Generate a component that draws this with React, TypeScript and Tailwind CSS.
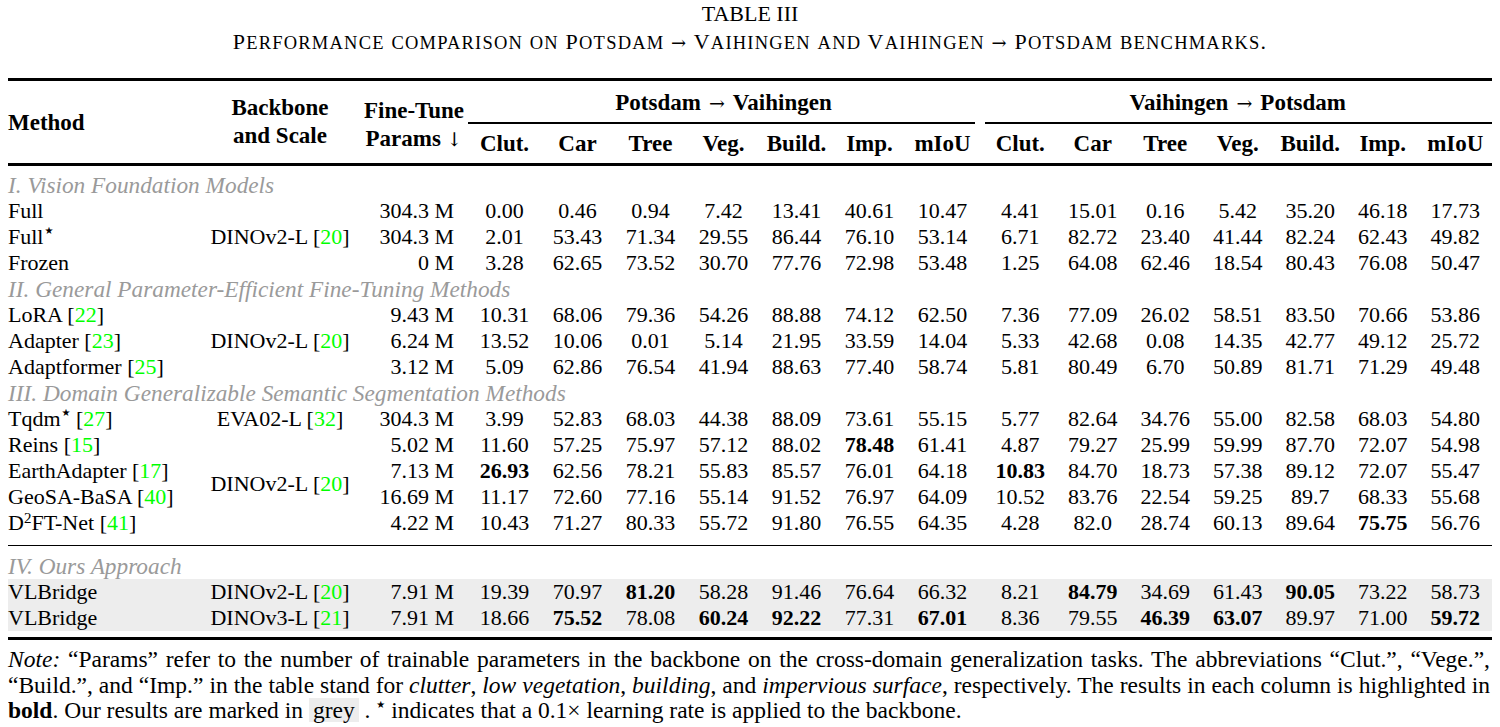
import React from "react";

// values prefixed with "*" are printed bold
interface RowData {
  name: React.ReactNode;
  backbone?: React.ReactNode;
  span?: number;
  params: string;
  a: string[];
  b: string[];
  grey?: boolean;
}

const Cite = ({ n }: { n: number }) => (
  <span>
    [<span className="text-[#00ff00]">{n}</span>]
  </span>
);

const Star = () => (
  <sup className="font-['DejaVu_Sans',sans-serif] text-[10px] -top-[1.05em] ml-[1px]">★</sup>
);

const cols =
  "grid grid-cols-[192px_160px_108px_repeat(7,73px)_5px_repeat(7,72.5px)] auto-rows-[26px]";

const Num = ({ v, grey }: { v: string; grey?: boolean }) => {
  const bold = v.startsWith("*");
  return (
    <div
      className={`flex items-center justify-center ${bold ? "font-bold" : ""} ${
        grey ? "bg-[#ededed]" : ""
      }`}
    >
      {bold ? v.slice(1) : v}
    </div>
  );
};

const Section = ({ label }: { label: string }) => (
  <div className="col-span-full flex items-center italic text-[23.3px] text-[#9a9a9a]">{label}</div>
);

const Row = ({ r }: { r: RowData }) => {
  const bg = r.grey ? "bg-[#ededed]" : "";
  return (
    <>
      <div className={`flex items-center ${bg}`}>{r.name}</div>
      {r.backbone !== undefined && (
        <div
          className={`flex items-center justify-center ${bg}`}
          style={{ gridRow: `span ${r.span ?? 1}` }}
        >
          {r.backbone}
        </div>
      )}
      <div className={`flex items-center justify-end pr-[14px] ${bg}`}>{r.params}</div>
      {r.a.map((v, i) => (
        <Num key={"a" + i} v={v} grey={r.grey} />
      ))}
      <div className={bg} />
      {r.b.map((v, i) => (
        <Num key={"b" + i} v={v} grey={r.grey} />
      ))}
    </>
  );
};

const dino2 = (
  <span>
    DINOv2-L <Cite n={20} />
  </span>
);

const group1: RowData[] = [
  { name: "Full", backbone: dino2, span: 3, params: "304.3 M", a: ["0.00", "0.46", "0.94", "7.42", "13.41", "40.61", "10.47"], b: ["4.41", "15.01", "0.16", "5.42", "35.20", "46.18", "17.73"] },
  { name: <span>Full<Star /></span>, params: "304.3 M", a: ["2.01", "53.43", "71.34", "29.55", "86.44", "76.10", "53.14"], b: ["6.71", "82.72", "23.40", "41.44", "82.24", "62.43", "49.82"] },
  { name: "Frozen", params: "0 M", a: ["3.28", "62.65", "73.52", "30.70", "77.76", "72.98", "53.48"], b: ["1.25", "64.08", "62.46", "18.54", "80.43", "76.08", "50.47"] },
];

const group2: RowData[] = [
  { name: <span>LoRA <Cite n={22} /></span>, backbone: dino2, span: 3, params: "9.43 M", a: ["10.31", "68.06", "79.36", "54.26", "88.88", "74.12", "62.50"], b: ["7.36", "77.09", "26.02", "58.51", "83.50", "70.66", "53.86"] },
  { name: <span>Adapter <Cite n={23} /></span>, params: "6.24 M", a: ["13.52", "10.06", "0.01", "5.14", "21.95", "33.59", "14.04"], b: ["5.33", "42.68", "0.08", "14.35", "42.77", "49.12", "25.72"] },
  { name: <span>Adaptformer <Cite n={25} /></span>, params: "3.12 M", a: ["5.09", "62.86", "76.54", "41.94", "88.63", "77.40", "58.74"], b: ["5.81", "80.49", "6.70", "50.89", "81.71", "71.29", "49.48"] },
];

const group3: RowData[] = [
  { name: <span>Tqdm<Star /> <Cite n={27} /></span>, backbone: <span>EVA02-L <Cite n={32} /></span>, params: "304.3 M", a: ["3.99", "52.83", "68.03", "44.38", "88.09", "73.61", "55.15"], b: ["5.77", "82.64", "34.76", "55.00", "82.58", "68.03", "54.80"] },
  { name: <span>Reins <Cite n={15} /></span>, backbone: dino2, span: 4, params: "5.02 M", a: ["11.60", "57.25", "75.97", "57.12", "88.02", "*78.48", "61.41"], b: ["4.87", "79.27", "25.99", "59.99", "87.70", "72.07", "54.98"] },
  { name: <span>EarthAdapter <Cite n={17} /></span>, params: "7.13 M", a: ["*26.93", "62.56", "78.21", "55.83", "85.57", "76.01", "64.18"], b: ["*10.83", "84.70", "18.73", "57.38", "89.12", "72.07", "55.47"] },
  { name: <span>GeoSA-BaSA <Cite n={40} /></span>, params: "16.69 M", a: ["11.17", "72.60", "77.16", "55.14", "91.52", "76.97", "64.09"], b: ["10.52", "83.76", "22.54", "59.25", "89.7", "68.33", "55.68"] },
  { name: <span>D<sup className="text-[15px]">2</sup>FT-Net <Cite n={41} /></span>, params: "4.22 M", a: ["10.43", "71.27", "80.33", "55.72", "91.80", "76.55", "64.35"], b: ["4.28", "82.0", "28.74", "60.13", "89.64", "*75.75", "56.76"] },
];

const ours: RowData[] = [
  { name: "VLBridge", backbone: dino2, params: "7.91 M", grey: true, a: ["19.39", "70.97", "*81.20", "58.28", "91.46", "76.64", "66.32"], b: ["8.21", "*84.79", "34.69", "61.43", "*90.05", "73.22", "58.73"] },
  { name: "VLBridge", backbone: <span>DINOv3-L <Cite n={21} /></span>, params: "7.91 M", grey: true, a: ["18.66", "*75.52", "78.08", "*60.24", "*92.22", "77.31", "*67.01"], b: ["8.36", "79.55", "*46.39", "*63.07", "89.97", "71.00", "*59.72"] },
];

const heads = ["Clut.", "Car", "Tree", "Veg.", "Build.", "Imp.", "mIoU"];

// caption in hand-made small caps: capital letters full size, the rest smaller
const SmallCaps = ({ text }: { text: string }) => (
  <>
    {text.split("").map((c, i) =>
      c >= "a" && c <= "z" ? (
        <span key={i} className="text-[18.5px]">
          {c.toUpperCase()}
        </span>
      ) : (
        <span key={i}>{c}</span>
      )
    )}
  </>
);

export default function App() {
  return (
    <div className="w-[1500px] h-[727px] overflow-hidden bg-white px-2 font-['Liberation_Serif',serif] text-[22px] leading-[26px] text-black">
      <div className="h-[26px] mt-[1px] text-center">TABLE III</div>
      <div className="h-[26px] mt-[2px] overflow-hidden text-center tracking-[1.2px]">
        <SmallCaps text="Performance comparison on Potsdam" />{" "}
        <span className="font-['DejaVu_Serif',serif] text-[18px]">→</span>{" "}
        <SmallCaps text="Vaihingen and Vaihingen" />{" "}
        <span className="font-['DejaVu_Serif',serif] text-[18px]">→</span>{" "}
        <SmallCaps text="Potsdam benchmarks." />
      </div>

      <div className="mt-[23px] h-[3px] bg-black" />

      {/* header */}
      <div className="grid grid-cols-[192px_160px_108px_repeat(7,73px)_5px_repeat(7,72.5px)] grid-rows-[41px_2px_39px] font-bold text-[23px]">
        <div className="col-start-1 row-start-1 row-span-3 flex items-center pt-[2px]">Method</div>
        <div className="col-start-2 row-start-1 row-span-3 flex flex-col items-center justify-center leading-[28px]">
          <span>Backbone</span>
          <span>and Scale</span>
        </div>
        <div className="col-start-3 row-start-1 row-span-3 flex flex-col items-center justify-center leading-[28px] pt-[6px]">
          <span>Fine-Tune</span>
          <span>
            Params{" "}
            <span className="font-normal font-['DejaVu_Serif',serif] text-[19px]">↓</span>
          </span>
        </div>
        <div className="col-start-4 col-span-7 row-start-1 flex items-center justify-center pt-[2px]">
          Potsdam{" "}
          <span className="font-normal font-['DejaVu_Serif',serif] text-[19px] mx-[8px]">→</span>{" "}
          Vaihingen
        </div>
        <div className="col-start-4 col-span-7 row-start-2 mr-[4px] bg-black" />
        <div className="col-start-12 col-span-7 row-start-1 flex items-center justify-center pt-[2px]">
          Vaihingen{" "}
          <span className="font-normal font-['DejaVu_Serif',serif] text-[19px] mx-[8px]">→</span>{" "}
          Potsdam
        </div>
        <div className="col-start-12 col-span-7 row-start-2 ml-[1px] bg-black" />
        {heads.map((h, i) => (
          <div key={"h1" + i} className="row-start-3 flex items-center justify-center" style={{ gridColumnStart: 4 + i }}>
            {h}
          </div>
        ))}
        {heads.map((h, i) => (
          <div key={"h2" + i} className="row-start-3 flex items-center justify-center" style={{ gridColumnStart: 12 + i }}>
            {h}
          </div>
        ))}
      </div>

      <div className="h-[3px] bg-black" />

      {/* body */}
      <div className={`${cols} mt-[6px]`}>
        <Section label="I. Vision Foundation Models" />
        {group1.map((r, i) => (
          <Row key={"g1" + i} r={r} />
        ))}
        <Section label="II. General Parameter-Efficient Fine-Tuning Methods" />
        {group2.map((r, i) => (
          <Row key={"g2" + i} r={r} />
        ))}
        <Section label="III. Domain Generalizable Semantic Segmentation Methods" />
        {group3.map((r, i) => (
          <Row key={"g3" + i} r={r} />
        ))}
      </div>

      <div className="mt-[8.5px] h-[1.5px] bg-black" />

      <div className={`${cols} mt-[7px]`}>
        <Section label="IV. Ours Approach" />
        {ours.map((r, i) => (
          <Row key={"o" + i} r={r} />
        ))}
      </div>

      <div className="mt-[6px] h-[3px] bg-black" />

      {/* note */}
      <div className="mt-[7px] w-[1482px] text-[23.5px] leading-[25.5px]">
        <div className="text-justify [text-align-last:justify] whitespace-nowrap [word-spacing:-4px]">
          <i>Note:</i> “Params” refer to the number of trainable parameters in the backbone on the
          cross-domain generalization tasks. The abbreviations “Clut.”, “Vege.”,
        </div>
        <div className="text-justify [text-align-last:justify] whitespace-nowrap [word-spacing:-4px]">
          “Build.”, and “Imp.” in the table stand for <i>clutter</i>, <i>low vegetation</i>,{" "}
          <i>building</i>, and <i>impervious surface</i>, respectively. The results in each column is
          highlighted in
        </div>
        <div className="h-[25.5px] overflow-hidden">
          <b>bold</b>. Our results are marked in{" "}
          <span className="bg-[#ededed] px-[4px] inline-block leading-[24px]">grey</span> .{" "}
          <sup className="font-['DejaVu_Sans',sans-serif] text-[10px] -top-[1em]">★</sup> indicates
          that a 0.1× learning rate is applied to the backbone.
        </div>
      </div>
    </div>
  );
}
